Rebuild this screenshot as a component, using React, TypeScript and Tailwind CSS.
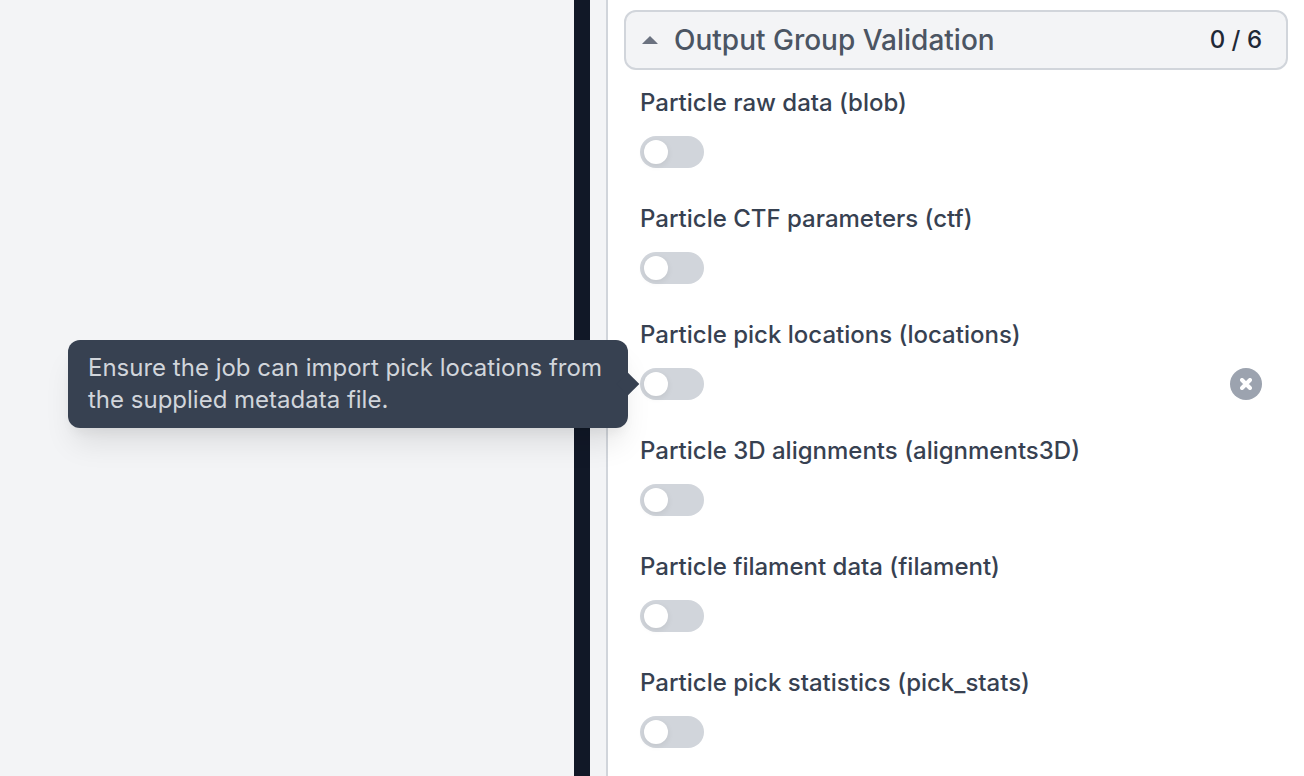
import { useState } from "react";

type Param = {
  id: string;
  label: string;
  hint?: string;
};

const params: Param[] = [
  { id: "blob", label: "Particle raw data (blob)" },
  { id: "ctf", label: "Particle CTF parameters (ctf)" },
  {
    id: "locations",
    label: "Particle pick locations (locations)",
    hint: "Ensure the job can import pick locations from the supplied metadata file.",
  },
  { id: "alignments3D", label: "Particle 3D alignments (alignments3D)" },
  { id: "filament", label: "Particle filament data (filament)" },
  { id: "pick_stats", label: "Particle pick statistics (pick_stats)" },
];

function Tooltip({ id, text }: { id: string; text: string }) {
  return (
    <div
      id={id}
      role="tooltip"
      className="absolute right-full top-1/2 z-10 mr-3 w-[560px] -translate-y-1/2 rounded-xl bg-[#374151] px-5 py-3 text-2xl leading-8 text-[#d1d5db] shadow-[0_20px_30px_-6px_rgba(0,0,0,0.1),0_8px_12px_-4px_rgba(0,0,0,0.05)]"
    >
      {text}
      <span className="absolute -right-2 top-1/2 size-4 -translate-y-1/2 rotate-45 bg-[#374151]" />
    </div>
  );
}

function Toggle({ param }: { param: Param }) {
  const [on, setOn] = useState(false);
  const hintId = param.id + "-hint";

  return (
    <div className="flex flex-col gap-[14px]">
      <label htmlFor={param.id} className="text-2xl leading-[38px] font-medium text-[#374151]">
        {param.label}
      </label>
      <div className="flex items-center justify-between">
        <div className="relative h-8 w-16">
          <input
            id={param.id}
            type="checkbox"
            role="switch"
            aria-describedby={param.hint ? hintId : undefined}
            checked={on}
            onChange={(e) => setOn(e.target.checked)}
            className="peer block h-8 w-16 cursor-pointer appearance-none rounded-full bg-[#d1d5db] checked:bg-[#4b5563]"
          />
          <span className="pointer-events-none absolute left-1 top-1 size-6 rounded-full bg-white shadow-[0_2px_6px_rgba(0,0,0,0.08)] peer-checked:left-9" />
          {param.hint && <Tooltip id={hintId} text={param.hint} />}
        </div>
        {param.hint && (
          <button
            type="button"
            aria-label="Reset"
            onClick={() => setOn(false)}
            className="flex size-8 items-center justify-center rounded-full bg-[#9ca3af] text-white"
          >
            <svg viewBox="0 0 12 12" className="size-3" fill="none" stroke="currentColor" strokeWidth="4" strokeLinecap="round">
              <path d="M2 2l8 8M10 2l-8 8" />
            </svg>
          </button>
        )}
      </div>
    </div>
  );
}

export default function App() {
  const [open, setOpen] = useState(true);

  return (
    <div className="grid min-h-screen grid-cols-[574fr_16px_714fr] bg-[#f3f4f6] font-['Inter',sans-serif] [font-optical-sizing:none]">
      <div />
      <div className="bg-[#111827]" />
      <aside className="ml-4 border-l-2 border-[#d1d5db] bg-white px-4 pt-[10px] pb-7">
        <button
          type="button"
          aria-expanded={open}
          onClick={() => setOpen(!open)}
          className="flex h-[60px] w-full items-center rounded-xl border-2 border-[#d1d5db] bg-[#f3f4f6] pl-4 pr-6 text-left"
        >
          <svg viewBox="0 0 16 8" className="h-2 w-4 text-[#6b7280]" fill="currentColor">
            <path d="M8 0l7.6 7.4q.3.6-.4.6H.8q-.7 0-.4-.6z" />
          </svg>
          <span className="ml-4 flex-1 text-[28px] leading-[38px] font-medium text-[#4b5563]">
            Output Group Validation
          </span>
          <span className="text-2xl leading-[38px] font-medium text-[#1f2937]">0 / 6</span>
        </button>
        {open && (
          <div className="mt-[14px] flex flex-col gap-8 pl-4 pr-[26px]">
            {params.map((param) => (
              <Toggle key={param.id} param={param} />
            ))}
          </div>
        )}
      </aside>
    </div>
  );
}
